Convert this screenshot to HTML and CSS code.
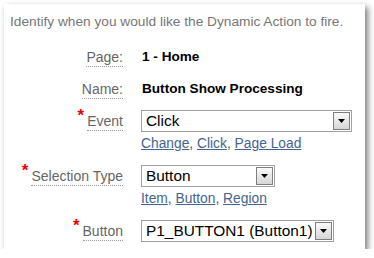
FILE: index.html
```html
<!DOCTYPE html>
<html lang="en">
<head>
  <meta charset="UTF-8">
  <title>Dynamic Action - When</title>
  <link rel="stylesheet" href="styles.css">
</head>
<body>
  <div class="panel">
    <p class="intro">Identify when you would like the Dynamic Action to fire.</p>
    <div class="form">
      <div class="field">
        <div class="label"><span class="lbl">Page:</span></div>
        <div class="value"><span class="text">1 - Home</span></div>
      </div>
      <div class="field">
        <div class="label"><span class="lbl">Name:</span></div>
        <div class="value"><span class="text">Button Show Processing</span></div>
      </div>
      <div class="field">
        <div class="label"><span class="req">*</span><span class="lbl">Event</span></div>
        <div class="value">
          <div class="select w-event">
            <span class="opt">Click</span>
            <span class="arrow"><svg width="7" height="4" viewBox="0 0 7 4"><path d="M0 0h7L3.5 4z"/></svg></span>
          </div>
          <div class="links"><a href="#">Change</a>, <a href="#">Click</a>, <a href="#">Page Load</a></div>
        </div>
      </div>
      <div class="field">
        <div class="label"><span class="req">*</span><span class="lbl">Selection Type</span></div>
        <div class="value">
          <div class="select w-type">
            <span class="opt">Button</span>
            <span class="arrow"><svg width="7" height="4" viewBox="0 0 7 4"><path d="M0 0h7L3.5 4z"/></svg></span>
          </div>
          <div class="links"><a href="#">Item</a>, <a href="#">Button</a>, <a href="#">Region</a></div>
        </div>
      </div>
      <div class="field">
        <div class="label"><span class="req">*</span><span class="lbl">Button</span></div>
        <div class="value">
          <div class="select w-button">
            <span class="opt">P1_BUTTON1 (Button1)</span>
            <span class="arrow"><svg width="7" height="4" viewBox="0 0 7 4"><path d="M0 0h7L3.5 4z"/></svg></span>
          </div>
        </div>
      </div>
    </div>
  </div>
</body>
</html>
```

FILE: styles.css
```css
body {
  margin: 0;
  background: #fff;
  font-family: "Liberation Sans", Arial, sans-serif;
  font-size: 14px;
}
.panel {
  margin: 4px 0 0 4px;
  width: 361px;
  height: 245px;
  box-sizing: border-box;
  padding: 9px 6px 0 6px;
  background: #fff;
  box-shadow: 3px 3px 6px rgba(0, 0, 0, 0.5);
}
.intro {
  margin: 0;
  color: #777;
  font-size: 13.7px;
  line-height: 17px;
  white-space: nowrap;
}
.form {
  margin-top: 16px;
}
.field {
  display: grid;
  grid-template-columns: 113px 1fr;
  column-gap: 18px;
  margin-bottom: 10px;
}
.label {
  text-align: right;
  height: 22px;
  line-height: 22px;
  color: #666;
  white-space: nowrap;
}
.lbl {
  border-bottom: 1px dotted #999;
  padding-bottom: 1px;
}
.req {
  color: #e00;
  font-weight: bold;
  font-size: 17px;
  line-height: 0;
  margin-right: 3px;
  vertical-align: 5px;
}
.value .text {
  display: block;
  line-height: 22px;
  font-size: 13.6px;
  font-weight: bold;
  color: #000;
  padding-left: 1px;
}
.select {
  display: flex;
  height: 22px;
  box-sizing: border-box;
  border: 1px solid #a0a0a0;
  background: #fff;
  font-size: 15.4px;
  color: #000;
}
.select .opt {
  flex: 1;
  padding-left: 4px;
  line-height: 20px;
  white-space: nowrap;
  overflow: hidden;
}
.select .arrow {
  width: 15px;
  margin: 1px;
  border: 1px solid #7f7f7f;
  background: linear-gradient(#fafafa, #d6d6d6);
  display: flex;
  align-items: center;
  justify-content: center;
}
.w-event {
  width: 211px;
}
.w-type {
  width: 134px;
}
.w-button {
  width: 193px;
}
.links {
  margin: 3px 0;
  line-height: 17px;
  font-size: 13.8px;
  color: #555;
}
.links a {
  color: #44648f;
  text-decoration: underline;
}
```
